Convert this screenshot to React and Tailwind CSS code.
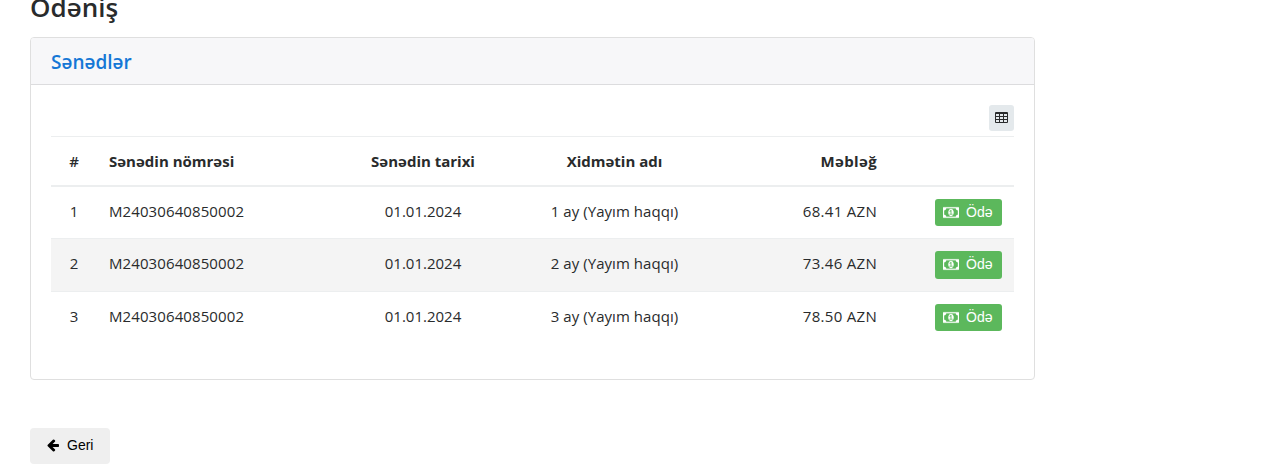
import React from "react";

const rows = [
  { id: 1, no: "M24030640850002", date: "01.01.2024", service: "1 ay (Yayım haqqı)", amount: "68.41 AZN", tone: "h-[51px]", button: "h-[27px]" },
  { id: 2, no: "M24030640850002", date: "01.01.2024", service: "2 ay (Yayım haqqı)", amount: "73.46 AZN", tone: "h-[53px] bg-[#f4f4f4] border-t border-[#eceeef]", button: "h-[28px] pb-px" },
  { id: 3, no: "M24030640850002", date: "01.01.2024", service: "3 ay (Yayım haqqı)", amount: "78.50 AZN", tone: "h-[53px] border-t border-[#eceeef]", button: "h-[27px]" },
];

const columns = "grid grid-cols-[46px_250px_152px_231px_159px_125px]";

function MoneyIcon() {
  return (
    <svg className="h-[15px] w-[16px] shrink-0" viewBox="0 0 1920 1792" fill="currentColor" stroke="currentColor" strokeWidth="25" aria-hidden="true">
      <path d="M768 1152h384v-96h-128v-448h-114l-148 137 77 80q42-37 55-57h2v288h-128v96zm512-256q0 70-21 142t-59.5 134-101.5 101-138 39-138-39-101.5-101-59.5-134-21-142 21-142 59.5-134 101.5-101 138-39 138 39 101.5 101 59.5 134 21 142zm512 256v-512q-106 0-181-75t-75-181h-1152q0 106-75 181t-181 75v512q106 0 181 75t75 181h1152q0-106 75-181t181-75zm128-832v1152q0 26-19 45t-45 19h-1792q-26 0-45-19t-19-45v-1152q0-26 19-45t45-19h1792q26 0 45 19t19 45z" />
    </svg>
  );
}

function TableIcon() {
  return (
    <svg className="h-[11px] w-[13px]" viewBox="0 0 13 11" aria-hidden="true">
      <path fill="currentColor" fillRule="evenodd" d="M1 0h11a1 1 0 0 1 1 1v9a1 1 0 0 1-1 1H1a1 1 0 0 1-1-1V1a1 1 0 0 1 1-1zM1 2v2h3V2zM5 2v2h3V2zM9 2v2h3V2zM1 5v2h3V5zM5 5v2h3V5zM9 5v2h3V5zM1 8v2h3V8zM5 8v2h3V8zM9 8v2h3V8z" />
    </svg>
  );
}

function ArrowIcon() {
  return (
    <svg className="h-[14px] w-[14px] shrink-0" viewBox="0 0 1792 1792" fill="currentColor" aria-hidden="true">
      <path d="M1664 896v128q0 53-32.5 90.5t-84.5 37.5h-704l293 294q38 36 38 90t-38 90l-75 76q-37 37-90 37-52 0-91-37l-651-652q-37-37-37-90 0-52 37-91l651-650q38-38 91-38 52 0 90 38l75 74q38 38 38 91t-38 91l-293 293h704q52 0 84.5 37.5t32.5 90.5z" />
    </svg>
  );
}

export default function App() {
  return (
    <main className="h-[475px] overflow-hidden bg-white pl-[30px] font-['Open_Sans',sans-serif] text-[15px] text-[#292b2c]">
      <h1 className="-mt-[11px] h-[48px] text-[26px] leading-[36px] font-semibold">Ödəniş</h1>
      <section className="h-[343px] w-[1005px] overflow-hidden rounded border border-[#dfdfdf]">
        <header className="flex h-[47px] items-center border-b border-[#dcdcde] bg-[#f7f7f9] px-5 pt-px">
          <h2 className="text-[19px] leading-6 font-semibold text-[#1577d6]">Sənədlər</h2>
        </header>
        <div className="px-5 pt-5">
          <div className="flex h-[31px] justify-end">
            <button aria-label="Cədvəl" className="flex h-[26px] w-[25px] items-start justify-center rounded-[3px] bg-[#e4e9ec] pt-[7px]">
              <TableIcon />
            </button>
          </div>
          <div className={`${columns} h-[51px] items-center border-t border-b-2 border-t-[#eceeef] border-b-[#eceeef] font-bold`}>
            <span className="text-center font-semibold">#</span>
            <span className="pl-3">Sənədin nömrəsi</span>
            <span className="text-center">Sənədin tarixi</span>
            <span className="text-center">Xidmətin adı</span>
            <span className="pr-3 text-right tracking-[0.35px]">Məbləğ</span>
          </div>
          {rows.map((r) => (
            <div key={r.id} className={`${columns} items-start pt-3 leading-[25px] ${r.tone}`}>
              <span className="text-center">{r.id}</span>
              <span className="pl-3 tracking-[0.1px]">{r.no}</span>
              <span className="text-center">{r.date}</span>
              <span className="text-center tracking-[0.05px]">{r.service}</span>
              <span className="pr-3 text-right tracking-[0.3px]">{r.amount}</span>
              <span className="flex justify-end pr-3">
                <button className={`flex w-[67px] items-center gap-[7px] rounded-[3px] bg-[#5cb85c] pl-2 font-['Liberation_Sans',sans-serif] text-[14px] text-white ${r.button}`}>
                  <MoneyIcon />
                  Ödə
                </button>
              </span>
            </div>
          ))}
        </div>
      </section>
      <button className="mt-12 flex h-9 w-20 items-center gap-[7px] rounded bg-[#efefef] pb-[2px] pl-4 font-['Liberation_Sans',sans-serif] text-[14px] text-black">
        <ArrowIcon />
        Geri
      </button>
    </main>
  );
}
